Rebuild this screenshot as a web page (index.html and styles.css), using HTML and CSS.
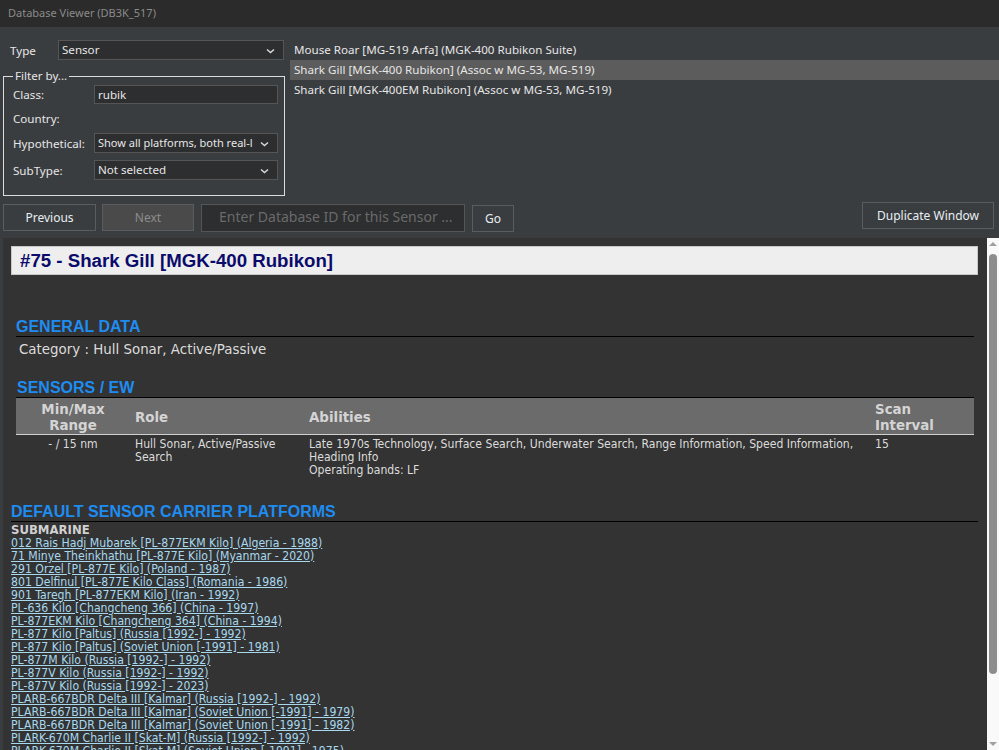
FILE: index.html
```html
<!DOCTYPE html>
<html lang="en">
<head>
    <meta charset="UTF-8">
    <title>Database Viewer (DB3K_517)</title>
    <link rel="stylesheet" href="styles.css">
</head>
<body>
    <div class="titlebar">Database Viewer (DB3K_517)</div>

    <div class="top">
        <div class="filters">
            <div class="type-row">
                <span class="type-label">Type</span>
                <div class="select type-select">Sensor<span class="chev"><svg width="9" height="6" viewBox="0 0 9 6"><path d="M1 1.5l3.5 3 3.5-3" fill="none" stroke="#d8d8d8" stroke-width="1.5"/></svg></span></div>
            </div>
            <fieldset class="filter-box">
                <legend>Filter by...</legend>
                <div class="frow row-class">
                    <span class="flabel">Class:</span>
                    <div class="textbox">rubik</div>
                </div>
                <div class="frow row-country">
                    <span class="flabel">Country:</span>
                </div>
                <div class="frow row-hypo">
                    <span class="flabel">Hypothetical:</span>
                    <div class="select hypo-select">Show all platforms, both real-l<span class="chev"><svg width="9" height="6" viewBox="0 0 9 6"><path d="M1 1.5l3.5 3 3.5-3" fill="none" stroke="#d8d8d8" stroke-width="1.5"/></svg></span></div>
                </div>
                <div class="frow row-sub">
                    <span class="flabel">SubType:</span>
                    <div class="select">Not selected<span class="chev"><svg width="9" height="6" viewBox="0 0 9 6"><path d="M1 1.5l3.5 3 3.5-3" fill="none" stroke="#d8d8d8" stroke-width="1.5"/></svg></span></div>
                </div>
            </fieldset>
        </div>
        <ul class="results">
            <li>Mouse Roar [MG-519 Arfa] (MGK-400 Rubikon Suite)</li>
            <li class="selected">Shark Gill [MGK-400 Rubikon] (Assoc w MG-53, MG-519)</li>
            <li>Shark Gill [MGK-400EM Rubikon] (Assoc w MG-53, MG-519)</li>
        </ul>
    </div>

    <div class="toolbar">
        <button class="btn prev">Previous</button>
        <button class="btn next" disabled>Next</button>
        <div class="idbox">Enter Database ID for this Sensor ...</div>
        <button class="btn go">Go</button>
        <button class="btn dup">Duplicate Window</button>
    </div>

    <div class="viewer">
        <div class="report">
            <h1 class="title">#75 - Shark Gill [MGK-400 Rubikon]</h1>

            <div class="section general">
                <h2>GENERAL DATA</h2>
                <p class="info">Category : Hull Sonar, Active/Passive</p>
            </div>

            <div class="section sensors">
                <h2>SENSORS / EW</h2>
                <table class="sensor-table">
                    <thead>
                        <tr>
                            <th class="c-range">Min/Max<br>Range</th>
                            <th class="c-role">Role</th>
                            <th class="c-abil">Abilities</th>
                            <th class="c-scan">Scan<br>Interval</th>
                        </tr>
                    </thead>
                    <tbody>
                        <tr>
                            <td class="c-range">- / 15 nm</td>
                            <td>Hull Sonar, Active/Passive Search</td>
                            <td>Late 1970s Technology, Surface Search, Underwater Search, Range Information, Speed Information, Heading Info<br>Operating bands: LF</td>
                            <td>15</td>
                        </tr>
                    </tbody>
                </table>
            </div>

            <div class="section carriers">
                <h2>DEFAULT SENSOR CARRIER PLATFORMS</h2>
                <div class="subhead">SUBMARINE</div>
                <ul class="platforms">
                    <li><a href="#">012 Rais Hadj Mubarek [PL-877EKM Kilo] (Algeria - 1988)</a></li>
                    <li><a href="#">71 Minye Theinkhathu [PL-877E Kilo] (Myanmar - 2020)</a></li>
                    <li><a href="#">291 Orzel [PL-877E Kilo] (Poland - 1987)</a></li>
                    <li><a href="#">801 Delfinul [PL-877E Kilo Class] (Romania - 1986)</a></li>
                    <li><a href="#">901 Taregh [PL-877EKM Kilo] (Iran - 1992)</a></li>
                    <li><a href="#">PL-636 Kilo [Changcheng 366] (China - 1997)</a></li>
                    <li><a href="#">PL-877EKM Kilo [Changcheng 364] (China - 1994)</a></li>
                    <li><a href="#">PL-877 Kilo [Paltus] (Russia [1992-] - 1992)</a></li>
                    <li><a href="#">PL-877 Kilo [Paltus] (Soviet Union [-1991] - 1981)</a></li>
                    <li><a href="#">PL-877M Kilo (Russia [1992-] - 1992)</a></li>
                    <li><a href="#">PL-877V Kilo (Russia [1992-] - 1992)</a></li>
                    <li><a href="#">PL-877V Kilo (Russia [1992-] - 2023)</a></li>
                    <li><a href="#">PLARB-667BDR Delta III [Kalmar] (Russia [1992-] - 1992)</a></li>
                    <li><a href="#">PLARB-667BDR Delta III [Kalmar] (Soviet Union [-1991] - 1979)</a></li>
                    <li><a href="#">PLARB-667BDR Delta III [Kalmar] (Soviet Union [-1991] - 1982)</a></li>
                    <li><a href="#">PLARK-670M Charlie II [Skat-M] (Russia [1992-] - 1992)</a></li>
                    <li><a href="#">PLARK-670M Charlie II [Skat-M] (Soviet Union [-1991] - 1975)</a></li>
                </ul>
            </div>
        </div>
        <div class="scrollbar">
            <svg class="arrow" width="12" height="12" viewBox="0 0 12 12"><path d="M2 8h8L6 4z" fill="#a0a0a0"/></svg>
            <div class="track"><div class="thumb"></div></div>
            <svg class="arrow" width="12" height="12" viewBox="0 0 12 12"><path d="M2 4h8L6 8z" fill="#a0a0a0"/></svg>
        </div>
    </div>
</body>
</html>
```

FILE: styles.css
```css
html, body {
    margin: 0;
    height: 750px;
    overflow: hidden;
}

body {
    background-color: #3a3d40;
    font-family: "Noto Sans", "Open Sans", sans-serif;
    font-size: 11.6px;
    color: #e6e6e6;
    display: flex;
    flex-direction: column;
}

.titlebar {
    height: 27px;
    line-height: 26px;
    padding-left: 8px;
    background-color: #2b2b2b;
    color: #8a8a8a;
    font-size: 11px;
    flex: none;
}

.top {
    display: flex;
    height: 175px;
    flex: none;
}

.filters {
    width: 290px;
    padding-left: 3px;
    padding-top: 13px;
    box-sizing: border-box;
    flex: none;
}

.type-row {
    display: flex;
    align-items: center;
    height: 20px;
}

.type-label {
    width: 55px;
    padding-left: 7px;
    box-sizing: border-box;
}

.select,
.textbox {
    position: relative;
    height: 20px;
    line-height: 17px;
    box-sizing: border-box;
    border: 1px solid #555;
    background-color: #2d2e30;
    padding-left: 3px;
    white-space: nowrap;
    overflow: hidden;
}

.type-select {
    width: 226px;
}

.hypo-select {
    font-size: 11px;
}

.chev {
    position: absolute;
    right: 8px;
    top: 7px;
    line-height: 0;
}

.filter-box {
    margin: 9px 0 0 0;
    width: 282px;
    height: 127px;
    box-sizing: border-box;
    border: 1px solid #dcdcdc;
    padding: 1px 5px 0 9px;
}

.filter-box legend {
    padding: 0 2px;
    margin-left: 0;
    line-height: 14px;
}

.frow {
    display: flex;
    align-items: center;
    height: 20px;
}

.row-country {
    margin-top: 4px;
}

.row-hypo {
    margin-top: 5px;
}

.row-sub {
    margin-top: 7px;
}

.flabel {
    width: 81px;
    flex: none;
}

.frow .select,
.frow .textbox {
    width: 184px;
}

.frow .textbox {
    height: 19px;
}

.results {
    list-style: none;
    margin: 13px 0 0 0;
    padding: 0;
    flex: 1;
}

.results li {
    height: 20px;
    line-height: 19px;
    padding-left: 4px;
}

.results li.selected {
    background-color: #5c5c5c;
}

.toolbar {
    display: flex;
    align-items: flex-start;
    height: 36px;
    padding-left: 3px;
    flex: none;
}

.btn {
    font-family: inherit;
    font-size: 12px;
    color: #e8eef2;
    background-color: #3a3d40;
    border: 1px solid #5a5d60;
    height: 27px;
    margin-top: 2px;
    padding: 0;
}

.prev {
    width: 93px;
}

.next {
    width: 92px;
    margin-left: 6px;
    background-color: #4a4a4a;
    color: #8c8c8c;
}

.idbox {
    width: 264px;
    height: 28px;
    margin-left: 7px;
    margin-top: 2px;
    box-sizing: border-box;
    border: 1px solid #555;
    background-color: #2d2e30;
    color: #6a6a6a;
    font-size: 14px;
    line-height: 24px;
    padding-left: 17px;
    white-space: nowrap;
    overflow: hidden;
}

.go {
    width: 42px;
    margin-left: 7px;
    margin-top: 3px;
}

.dup {
    width: 132px;
    margin-left: auto;
    margin-right: 5px;
    margin-top: 0;
}

.viewer {
    flex: 1;
    display: flex;
    margin-left: 3px;
    background-color: #333333;
    min-height: 0;
}

.report {
    flex: 1;
    overflow: hidden;
    padding: 8px 9px 0 8px;
    font-family: "DejaVu Sans", Verdana, sans-serif;
    color: #dcdcdc;
}

.title {
    margin: 0;
    height: 29px;
    box-sizing: border-box;
    background-color: #eeeeee;
    border: 1px solid #c8c8c8;
    color: #0b0b6b;
    font-family: "Liberation Sans", Arial, sans-serif;
    font-size: 18.67px;
    font-weight: bold;
    line-height: 27px;
    padding-left: 8px;
}

.section h2 {
    margin: 0;
    font-family: "Liberation Sans", Arial, sans-serif;
    font-size: 16px;
    font-weight: bold;
    color: #1e8cf0;
    line-height: 16px;
    padding-left: 1px;
    padding-bottom: 1px;
    border-bottom: 1px solid #000;
}

.section {
    margin: 0 4px 0 5px;
}

.general {
    margin-top: 44px;
}

.general h2 {
    padding-left: 0;
}

.info {
    margin: 4px 0 0 3px;
    font-size: 13.4px;
    line-height: 17px;
}

.sensors {
    margin-top: 22px;
}

.sensor-table {
    width: 100%;
    border-collapse: collapse;
    font-size: 12.1px;
    font-stretch: condensed;
}

.sensor-table th {
    background-color: #6b6b6b;
    color: #d4d4d4;
    font-size: 13.4px;
    font-weight: bold;
    font-stretch: normal;
    text-align: left;
    line-height: 16px;
    height: 33px;
    padding: 3px 5px 0 6px;
    border-bottom: 1px solid #d0d0d0;
}

.sensor-table td {
    vertical-align: top;
    line-height: 13px;
    padding: 3px 5px 6px 6px;
}

.sensor-table .c-range {
    width: 102px;
    text-align: center;
}

.sensor-table th.c-role {
    width: 163px;
}

.sensor-table th.c-abil {
    width: 555px;
}

.carriers {
    margin: 21px 0 0 0;
}

.carriers h2 {
    padding-left: 0;
}

.subhead {
    font-weight: bold;
    font-size: 13px;
    font-stretch: condensed;
    line-height: 15px;
    color: #d0d0d0;
}

.platforms {
    list-style: none;
    margin: 0;
    padding: 0;
    font-size: 12.15px;
    font-stretch: condensed;
    line-height: 13px;
}

.platforms a {
    color: #a8d8ee;
}

.scrollbar {
    width: 12px;
    flex: none;
    background-color: #f9f9f9;
    display: flex;
    flex-direction: column;
    align-items: center;
}

.track {
    flex: 1;
    width: 100%;
    display: flex;
    justify-content: center;
    padding-top: 4px;
}

.thumb {
    width: 8px;
    height: 420px;
    border-radius: 4px;
    background-color: #8d8d8d;
}
```
